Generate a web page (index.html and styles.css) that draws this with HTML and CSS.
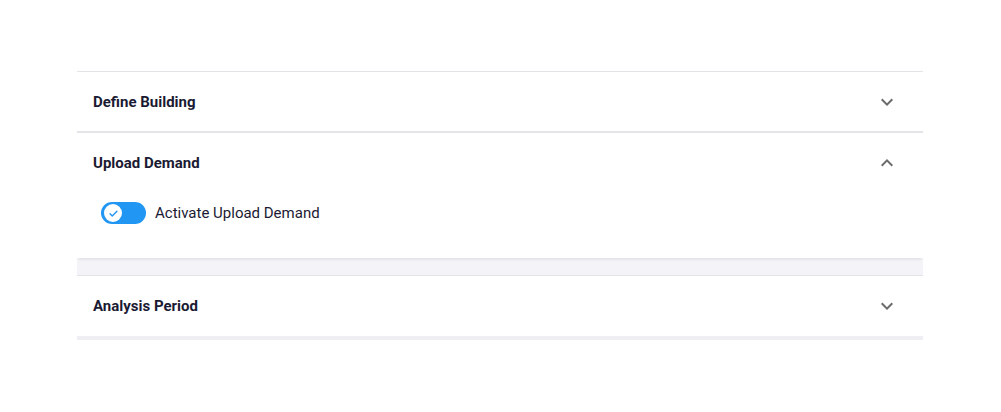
FILE: index.html
```html
<!DOCTYPE html>
<html lang="en">
<head>
  <meta charset="UTF-8">
  <title>Building Setup</title>
  <link rel="stylesheet" href="styles.css">
</head>
<body>
  <div class="page">
    <div class="accordion">

      <div class="panel">
        <div class="summary">
          <span class="title">Define Building</span>
          <svg class="chevron" viewBox="0 0 24 24"><path d="M16.59 8.59 12 13.17 7.41 8.59 6 10l6 6 6-6z"/></svg>
        </div>
      </div>

      <div class="panel expanded">
        <div class="summary">
          <span class="title">Upload Demand</span>
          <svg class="chevron" viewBox="0 0 24 24"><path d="M12 8l-6 6 1.41 1.41L12 10.83l4.59 4.58L18 14z"/></svg>
        </div>
        <div class="details">
          <label class="switch">
            <span class="track">
              <span class="knob">
                <svg viewBox="0 0 24 24"><path d="M6.5 12.5l3.5 3.5 7.5-7.5" /></svg>
              </span>
            </span>
            <span class="switch-label">Activate Upload Demand</span>
          </label>
        </div>
      </div>

      <div class="panel last">
        <div class="summary">
          <span class="title">Analysis Period</span>
          <svg class="chevron" viewBox="0 0 24 24"><path d="M16.59 8.59 12 13.17 7.41 8.59 6 10l6 6 6-6z"/></svg>
        </div>
      </div>

    </div>
  </div>
</body>
</html>
```

FILE: styles.css
```css
body {
  margin: 0;
  background: #fff;
  font-family: Roboto, "Liberation Sans", Arial, sans-serif;
  color: #1b1a33;
}

.page {
  padding: 72px 78px 0 77px;
}

.accordion {
  background: #f4f4f8;
  width: 846px;
}

.panel {
  background: #fff;
  box-shadow: 0 -1px 0 0 #e4e4e8, 0 3px 2px -1px rgba(0, 0, 0, 0.06);
}

.panel.last {
  margin-bottom: 4px;
  box-shadow: 0 -1px 0 0 #e4e4e8, 0 4px 0 0 #eeeef3;
}

.panel + .panel {
  border-top: 1px solid #e4e4ea;
}

.panel.expanded {
  margin-bottom: 18px;
}

.panel.expanded + .panel {
  border-top: none;
}

.summary {
  height: 60px;
  display: flex;
  align-items: center;
  justify-content: space-between;
  padding: 0 24px 0 16px;
}

.title {
  font-size: 15px;
  font-weight: 700;
  color: #1b1a33;
}

.chevron {
  width: 24px;
  height: 24px;
  fill: #6b6b6b;
}

.details {
  padding: 9px 16px 34px 24px;
}

.switch {
  display: flex;
  align-items: center;
  gap: 9px;
}

.track {
  width: 45px;
  height: 22px;
  border-radius: 11px;
  background: #2196f3;
  display: flex;
  align-items: center;
  padding-left: 3px;
  box-sizing: border-box;
}

.knob {
  width: 18px;
  height: 18px;
  border-radius: 50%;
  background: #fff;
  display: flex;
  align-items: center;
  justify-content: center;
}

.knob svg {
  width: 15px;
  height: 15px;
  fill: none;
  stroke: #2196f3;
  stroke-width: 2.2;
  stroke-linecap: round;
  stroke-linejoin: round;
}

.switch-label {
  font-size: 15px;
  color: #1b1a33;
}
```
